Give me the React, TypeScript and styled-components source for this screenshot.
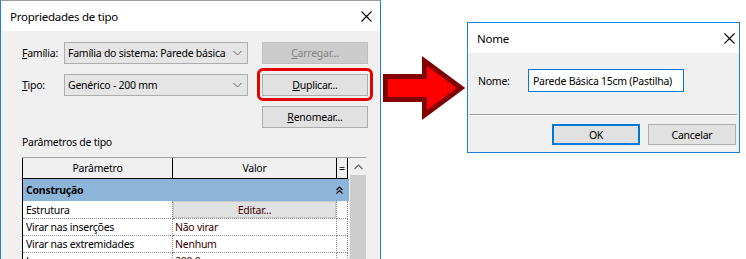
import React from 'react'
import styled, { createGlobalStyle } from 'styled-components'

const GlobalStyle = createGlobalStyle`
  html, body {
    margin: 0;
    padding: 0;
    background: #fff;
  }
  body {
    font-family: 'Noto Sans', 'Liberation Sans', sans-serif;
    font-size: 10.5px;
    letter-spacing: -0.25px;
    color: #000;
  }
`

const Page = styled.div`
  width: 746px;
  height: 259px;
  overflow: hidden;
  display: flex;
  align-items: flex-start;
  background: #fff;
`

const Window = styled.div<{ $width: number; $height: number; $cut?: boolean }>`
  box-sizing: border-box;
  width: ${p => p.$width}px;
  height: ${p => p.$height}px;
  flex: none;
  display: flex;
  flex-direction: column;
  border: 1px solid #1a82d8;
  border-top-color: ${p => (p.$cut ? '#9c9c9c' : '#1a82d8')};
  border-bottom-width: ${p => (p.$cut ? 0 : 1)}px;
  background: #f0f0f0;
  overflow: hidden;
`

const TitleBar = styled.div<{ $closeGap: number }>`
  height: 30px;
  flex: none;
  display: flex;
  align-items: center;
  justify-content: space-between;
  padding: 0 ${p => p.$closeGap}px 0 9px;
  background: #fff;
  font-size: 11.5px;
`

const Body = styled.div`
  flex: 1;
  display: flex;
  flex-direction: column;
`

const FormGrid = styled.div`
  display: grid;
  grid-template-columns: 42px 184px 120px;
  grid-auto-rows: 22px;
  row-gap: 10px;
  padding: 11px 0 0 21px;
  align-items: center;
  & > :nth-child(3n) {
    justify-self: end;
    width: 106px;
  }
`

const Label = styled.span`
  line-height: 15px;
`

const Select = styled.div`
  box-sizing: border-box;
  height: 22px;
  display: flex;
  align-items: center;
  justify-content: space-between;
  padding: 0 5px 0 3px;
  border: 1px solid #adadad;
  background: #e5e5e5;
  white-space: nowrap;
  & > svg {
    flex: none;
  }
`

const Button = styled.div<{ $disabled?: boolean; $default?: boolean }>`
  box-sizing: border-box;
  height: 22px;
  display: flex;
  align-items: center;
  justify-content: center;
  border: ${p => (p.$default ? '2px solid #0078d7' : '1px solid ' + (p.$disabled ? '#bfbfbf' : '#adadad'))};
  background: ${p => (p.$disabled ? '#cccccc' : '#e1e1e1')};
  color: ${p => (p.$disabled ? '#838383' : '#000')};
  white-space: nowrap;
`

const Highlight = styled.div`
  position: relative;
  &::after {
    content: '';
    position: absolute;
    inset: -6px -5px -5px -5px;
    border: 3px solid #e60000;
    border-radius: 6px;
    pointer-events: none;
  }
`

const SectionLabel = styled.div`
  margin: 7px 0 7px 21px;
  line-height: 15px;
`

const GridControl = styled.div`
  display: flex;
  margin-left: 21px;
  width: 344px;
  border-top: 1px solid #a0a0a0;
`

const Table = styled.div`
  width: 326px;
  flex: none;
  border-left: 1px solid #000;
  background: #fff;
`

const Row = styled.div<{ $height: number }>`
  display: grid;
  grid-template-columns: 150px 164px 11px;
  height: ${p => p.$height}px;
`

const HeadCell = styled.div`
  display: flex;
  align-items: center;
  justify-content: center;
  background: #f0f0f0;
  border-right: 1px solid #000;
  border-bottom: 1px solid #000;
`

const Cell = styled.div<{ $value?: boolean }>`
  display: flex;
  align-items: center;
  padding-left: ${p => (p.$value ? 2 : 3)}px;
  border-right: 1px dotted #8a8a8a;
  border-bottom: 1px dotted #8a8a8a;
  color: ${p => (p.$value ? '#3a0000' : '#000')};
  white-space: nowrap;
  overflow: hidden;
`

const EditButton = styled.div`
  flex: 1;
  align-self: stretch;
  margin-left: -2px;
  display: flex;
  align-items: center;
  justify-content: center;
  background: #e1e1e1;
  border: 1px solid #c8c8c8;
  color: #3a0000;
`

const Category = styled.div`
  height: 22px;
  display: flex;
  align-items: center;
  justify-content: space-between;
  padding: 0 6px 0 3px;
  background: #8db4d9;
  font-weight: bold;
`

const ScrollBar = styled.div`
  width: 18px;
  flex: none;
  display: flex;
  flex-direction: column;
  padding-left: 1px;
`

const ScrollArrow = styled.div`
  height: 17px;
  display: flex;
  align-items: center;
  justify-content: center;
  width: 16px;
`

const ScrollThumb = styled.div`
  width: 16px;
  height: 120px;
  background: #cdcdcd;
`

const Arrow = styled.svg`
  flex: none;
  margin-top: 50px;
`

const NameRow = styled.div`
  display: flex;
  align-items: center;
  padding: 16px 0 0 10px;
`

const NameLabel = styled.span`
  width: 50px;
`

const Input = styled.div`
  box-sizing: border-box;
  width: 156px;
  height: 23px;
  display: flex;
  align-items: center;
  padding-left: 4px;
  border: 1px solid #0078d7;
  background: #fff;
  white-space: nowrap;
`

const Separator = styled.div`
  margin: 22px 2px 0 2px;
  border-top: 1px solid #a0a0a0;
  border-bottom: 1px solid #fff;
`

const ButtonRow = styled.div`
  display: flex;
  justify-content: flex-end;
  gap: 8px;
  padding: 8px 3px 0 0;
  & > div {
    width: 88px;
    height: 21px;
  }
`

const Close = () => (
  <svg width="11" height="11" viewBox="0 0 11 11">
    <path d="M0.5 0.5 L10.5 10.5 M10.5 0.5 L0.5 10.5" stroke="#000" strokeWidth="1.1" />
  </svg>
)

const Chevron = () => (
  <svg width="9" height="6" viewBox="0 0 9 6">
    <path d="M0.5 1 L4.5 5 L8.5 1" stroke="#606060" strokeWidth="1" fill="none" />
  </svg>
)

const App = () => (
  <Page>
    <GlobalStyle />
    <Window $width={381} $height={270} $cut>
      <TitleBar $closeGap={8}>
        <span>Propriedades de tipo</span>
        <Close />
      </TitleBar>
      <Body>
        <FormGrid>
          <Label>
            <u>F</u>amília:
          </Label>
          <Select>
            <span>Família do sistema: Parede básica</span>
            <Chevron />
          </Select>
          <Button $disabled>
            <span>
              <u>C</u>arregar...
            </span>
          </Button>
          <Label>
            <u>T</u>ipo:
          </Label>
          <Select>
            <span>Genérico - 200 mm</span>
            <Chevron />
          </Select>
          <Highlight>
            <Button>
              <span>
                <u>D</u>uplicar...
              </span>
            </Button>
          </Highlight>
          <span />
          <span />
          <Button>
            <span>
              <u>R</u>enomear...
            </span>
          </Button>
        </FormGrid>
        <SectionLabel>Parâmetros de tipo</SectionLabel>
        <GridControl>
          <Table>
            <Row $height={21}>
              <HeadCell>Parâmetro</HeadCell>
              <HeadCell>Valor</HeadCell>
              <HeadCell>=</HeadCell>
            </Row>
            <Category>
              <span>Construção</span>
              <svg width="7" height="8" viewBox="0 0 7 8">
                <path d="M0.5 4 L3.5 1 L6.5 4 M0.5 7.5 L3.5 4.5 L6.5 7.5" stroke="#000" strokeWidth="1.1" fill="none" />
              </svg>
            </Category>
            <Row $height={18}>
              <Cell>Estrutura</Cell>
              <Cell $value>
                <EditButton>Editar...</EditButton>
              </Cell>
              <Cell />
            </Row>
            <Row $height={17}>
              <Cell>Virar nas inserções</Cell>
              <Cell $value>Não virar</Cell>
              <Cell />
            </Row>
            <Row $height={17}>
              <Cell>Virar nas extremidades</Cell>
              <Cell $value>Nenhum</Cell>
              <Cell />
            </Row>
            <Row $height={17}>
              <Cell>Largura</Cell>
              <Cell $value>200.0</Cell>
              <Cell />
            </Row>
          </Table>
          <ScrollBar>
            <ScrollArrow>
              <svg width="9" height="6" viewBox="0 0 9 6">
                <path d="M0.5 5 L4.5 1 L8.5 5" stroke="#606060" strokeWidth="1.2" fill="none" />
              </svg>
            </ScrollArrow>
            <ScrollThumb />
          </ScrollBar>
        </GridControl>
      </Body>
    </Window>

    <Arrow width="86" height="80" viewBox="0 0 86 80">
      <polygon
        points="4.5,26.5 43.5,26.5 43.5,11 80,38 43.5,65 43.5,49.5 4.5,49.5"
        fill="#ff0000"
        stroke="#800000"
        strokeWidth="5"
      />
    </Arrow>

    <Window $width={273} $height={131} style={{ marginTop: 22 }}>
      <TitleBar $closeGap={4}>
        <span>Nome</span>
        <Close />
      </TitleBar>
      <Body>
        <NameRow>
          <NameLabel>Nome:</NameLabel>
          <Input>Parede Básica 15cm (Pastilha)</Input>
        </NameRow>
        <Separator />
        <ButtonRow>
          <Button $default>OK</Button>
          <Button>Cancelar</Button>
        </ButtonRow>
      </Body>
    </Window>
  </Page>
)

export default App
